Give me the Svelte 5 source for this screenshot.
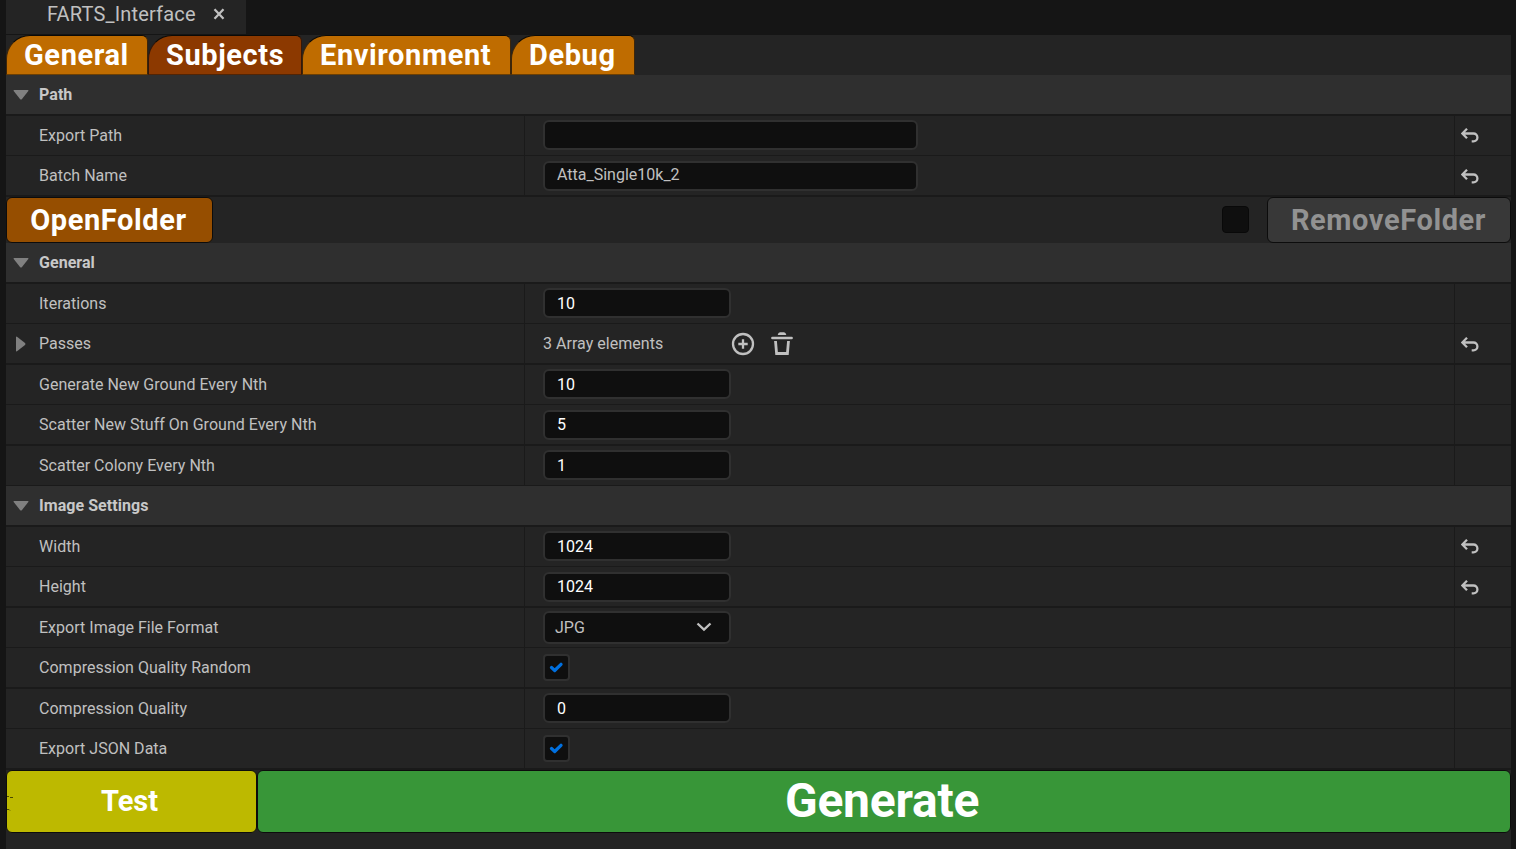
<script>
  const sections = [
    {
      title: 'Path',
      toolbar: true,
      rows: [
        { label: 'Export Path', kind: 'text', value: '', reset: true },
        { label: 'Batch Name', kind: 'text', value: 'Atta_Single10k_2', reset: true }
      ]
    },
    {
      title: 'General',
      rows: [
        { label: 'Iterations', kind: 'number', value: '10' },
        { label: 'Passes', kind: 'array', value: '3 Array elements', reset: true },
        { label: 'Generate New Ground Every Nth', kind: 'number', value: '10' },
        { label: 'Scatter New Stuff On Ground Every Nth', kind: 'number', value: '5' },
        { label: 'Scatter Colony Every Nth', kind: 'number', value: '1' }
      ]
    },
    {
      title: 'Image Settings',
      rows: [
        { label: 'Width', kind: 'number', value: '1024', reset: true },
        { label: 'Height', kind: 'number', value: '1024', reset: true },
        { label: 'Export Image File Format', kind: 'combo', value: 'JPG' },
        { label: 'Compression Quality Random', kind: 'check' },
        { label: 'Compression Quality', kind: 'number', value: '0' },
        { label: 'Export JSON Data', kind: 'check' }
      ]
    }
  ];
</script>

<div class="window">
  <div class="titlebar">
    <div class="doc-tab">
      <span class="doc-name">FARTS_Interface</span>
      <svg class="close" width="12" height="12" viewBox="0 0 12 12"><path d="M1.500 1.300l9 9.400M10.500 1.300l-9 9.400" /></svg>
    </div>
  </div>
  <div class="panel">
    <div class="tabs">
      <div class="tab general"><span>General</span></div>
      <div class="tab subjects active"><span>Subjects</span></div>
      <div class="tab environment"><span>Environment</span></div>
      <div class="tab debug"><span>Debug</span></div>
    </div>

    {#each sections as section}
      <div class="header">
        <svg class="arrow" width="16" height="10" viewBox="0 0 16 10"><path d="M1 0h14q.8.3.3 1L9 9q-1 1-2 0L.7 1q-.5-.7.3-1z" /></svg>
        <span>{section.title}</span>
      </div>
      {#each section.rows as row, i}
        <div class="row" class:odd={i % 2 === 1}>
          <div class="label">
            {#if row.kind === 'array'}
              <svg class="expand" width="10" height="16" viewBox="0 0 10 16"><path d="M0 1q.3-.8 1-.3L9 7q1 1 0 2l-8 6.300q-.7.5-1-.3z" /></svg>
            {/if}
            <span>{row.label}</span>
          </div>
          <div class="value">
            {#if row.kind === 'text' || row.kind === 'number'}
              <div class="field {row.kind}"><span>{row.value}</span></div>
            {:else if row.kind === 'combo'}
              <div class="field combo">
                <span>{row.value}</span>
                <svg width="16" height="10" viewBox="0 0 16 10"><path d="M1.500 1.500L8 7.600l6.500-6.100" /></svg>
              </div>
            {:else if row.kind === 'check'}
              <div class="field check">
                <svg width="14" height="12" viewBox="0 0 14 12"><path d="M2.500 6.500l3.200 3L12 3.300" /></svg>
              </div>
            {:else}
              <span class="count">{row.value}</span>
              <svg class="add" width="24" height="24" viewBox="0 0 24 24"><circle cx="12" cy="12" r="10" /><path d="M12 7.300v9.400M7.300 12h9.400" /></svg>
              <svg class="trash" width="22" height="24" viewBox="0 0 22 24">
                <path class="solid" d="M6.700 4Q7.200 1.300 9 1.300h4q1.800 0 2.300 2.700z" />
                <path class="lid" d="M1.400 7h19.200" />
                <path d="M4.500 10l1.100 12.500h10.800l1.100-12.500" />
              </svg>
            {/if}
          </div>
          <div class="reset">
            {#if row.reset}
              <svg width="18" height="15" viewBox="0 0 18 15"><path d="M6 .800L1.300 5.500 6 10.200M1.300 5.500h11.200a3.900 3.900 0 0 1 0 7.800h-1.800" /></svg>
            {/if}
          </div>
        </div>
      {/each}
      {#if section.toolbar}
        <div class="toolbar">
          <div class="button open"><span>OpenFolder</span></div>
          <div class="confirm"></div>
          <div class="button remove"><span>RemoveFolder</span></div>
        </div>
      {/if}
    {/each}

    <div class="actions">
      <div class="button test">
        <svg width="6" height="16" viewBox="0 0 6 16"><path d="M0 1.500h2M3 2.500h3M0 14.500h2l1 1" /></svg>
        <span>Test</span>
      </div>
      <div class="button generate"><span>Generate</span></div>
    </div>
  </div>
</div>

<style>
  :global(body) {
    margin: 0;
    background: #151515;
  }
  .window {
    box-sizing: border-box;
    width: 1516px;
    height: 849px;
    padding: 0 5px 0 6px;
    overflow: hidden;
    background: #151515;
    color: #c0c0c0;
    font: 16px/20px Roboto, sans-serif;
    display: flex;
    flex-direction: column;
  }
  span { white-space: nowrap; }
  path, circle { fill: none; stroke: #c0c0c0; stroke-width: 2.300; }
  .titlebar { height: 35px; flex: none; }
  .doc-tab {
    box-sizing: border-box;
    width: 240px;
    height: 34px;
    padding: 2px 0 0 41px;
    display: flex;
    background: #242424;
  }
  .doc-name { width: 166px; font-size: 20px; line-height: 24px; letter-spacing: 0.17px; }
  .close { margin-top: 6px; }
  .panel {
    flex: 1;
    min-height: 0;
    display: flex;
    flex-direction: column;
    background: #242424;
  }
  .tabs { height: 40px; flex: none; display: flex; }
  .tab {
    box-sizing: border-box;
    height: 40px;
    border: 1px solid #3d260a;
    border-top-color: #0c0a06;
    border-bottom-color: #6b3f04;
    border-radius: 24px 6px 0 0;
    background: #bf6c00;
    color: #fff;
    font-size: 29px;
    font-weight: 700;
    letter-spacing: 0.6px;
    line-height: 39px;
    padding-left: 17px;
  }
  .tab.active { background: #8c3900; border-color: #0c0a06 #33180a #512405; }
  .general { width: 142px; }
  .subjects { width: 154px; }
  .environment { width: 209px; }
  .debug { width: 124px; }
  .header {
    height: 39px;
    flex: none;
    border-bottom: 2px solid #1a1a1a;
    background: #2f2f2f;
    display: flex;
    align-items: center;
    font-weight: 700;
    letter-spacing: 0.05px;
    color: #c8c8c8;
  }
  .arrow { margin: 0 10px 0 7px; }
  .arrow path, .expand path { fill: #808080; stroke: none; }
  .row {
    height: 39px;
    flex: none;
    display: grid;
    grid-template-columns: 519px 930px 1fr;
    border-bottom: 1px solid #1a1a1a;
  }
  .row.odd, .row:has(+ .toolbar), .row:has(+ .actions) { border-bottom-width: 2px; }
  .label {
    box-sizing: border-box;
    padding-left: 33px;
    display: flex;
    align-items: center;
    position: relative;
    border-right: 1px solid #1a1a1a;
    letter-spacing: 0.02px;
  }
  .expand { position: absolute; left: 10px; top: 12px; }
  .value {
    box-sizing: border-box;
    padding: 4px 0 0 18px;
    display: flex;
    align-items: flex-start;
    border-right: 1px solid #1a1a1a;
  }
  .odd .value { padding-top: 5px; }
  .field {
    box-sizing: border-box;
    border: 2px solid #303030;
    border-radius: 6px;
    background: #0f0f0f;
    height: 30px;
    line-height: 26px;
    padding-left: 12px;
  }
  .text { width: 375px; line-height: 23px; }
  .number { width: 188px; color: #fff; line-height: 28px; }
  .odd .number { line-height: 26px; }
  .combo {
    width: 188px;
    height: 33px;
    margin-top: -1px;
    padding: 0 17px 0 10px;
    display: flex;
    align-items: center;
    justify-content: space-between;
  }
  .combo svg { margin-bottom: 2px; }
  .check { width: 27px; height: 27px; margin-top: 2px; padding: 5px 0 0 4px; border-radius: 4px; line-height: 0; }
  .odd .check { margin-top: 1px; }
  .check path { stroke: #0070e0; stroke-width: 3.200; stroke-linejoin: round; stroke-linecap: round; }
  .count { width: 188px; line-height: 29px; letter-spacing: 0.03px; }
  .add { margin-top: 3px; }
  .trash { margin: 2px 0 0 16px; }
  .trash path { stroke-width: 2.800; }
  .trash .lid { stroke-width: 2.500; stroke-linecap: round; }
  .trash .solid { fill: #c0c0c0; stroke: none; }
  .reset { padding: 12px 0 0 6px; line-height: 0; }
  .odd .reset { padding-top: 13px; }
  .toolbar { height: 46px; flex: none; display: flex; }
  .button {
    box-sizing: border-box;
    border: 1px solid #0c0c0c;
    border-radius: 6px;
    color: #fff;
    font-size: 29px;
    font-weight: 700;
    display: flex;
    align-items: center;
    justify-content: center;
  }
  .open { width: 207px; background: #964e00; letter-spacing: 0.6px; padding-right: 2px; }
  .confirm {
    box-sizing: border-box;
    width: 27px;
    height: 27px;
    margin: 9px 18px 0 auto;
    border: 1px solid #090909;
    border-radius: 4px;
    background: #0f0f0f;
  }
  .remove { width: 244px; background: #383838; color: #929292; letter-spacing: 0.6px; padding-right: 1px; }
  .actions { height: 63px; flex: none; display: flex; }
  .test { width: 251px; background: #bdb900; position: relative; padding: 0 4px 2px 0; }
  .test svg { position: absolute; left: 0; top: 24px; }
  .test path { stroke: #4a4800; stroke-width: 1; }
  .generate { flex: 1; background: #389638; font-size: 48px; letter-spacing: -0.25px; padding: 0 4px 2px 0; }
</style>
